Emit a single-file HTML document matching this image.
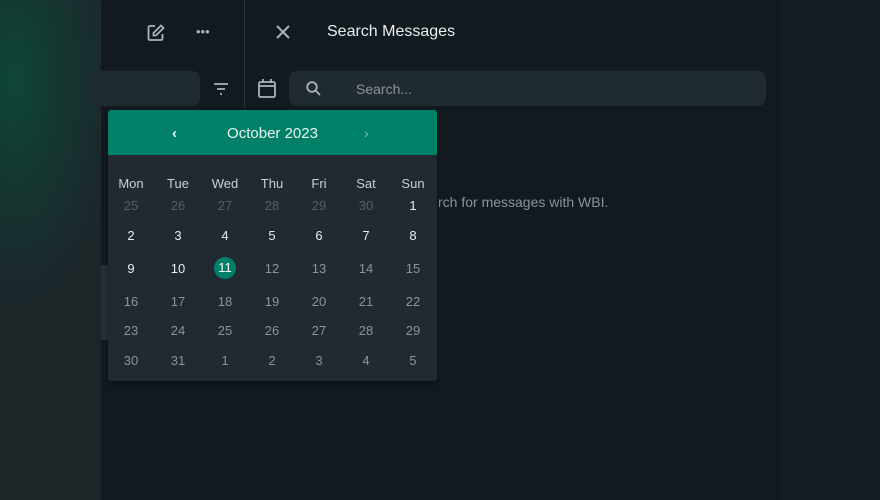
<!DOCTYPE html>
<html><head><style>
*{margin:0;padding:0;box-sizing:border-box}
body{width:880px;height:500px;overflow:hidden;background:#121a20;font-family:"Liberation Sans",sans-serif;position:relative}
.abs{position:absolute}
.left{left:0;top:0;width:101px;height:500px;background:radial-gradient(ellipse 110px 240px at 15px 80px,#0e4638 0%,#153630 45%,#1b2a2e 80%,#1c2629 100%)}
.right{left:780px;top:0;width:100px;height:500px;background:#151d23}
.cal{left:108px;top:110px;width:329px;height:271px;background:#202a30;border-radius:3px;overflow:hidden;box-shadow:0 2px 6px rgba(0,0,0,.4)}
.hdr{height:45px;background:#018068;color:#e9f5f1;font-size:15px;text-align:center;line-height:47px;position:relative}
.c{position:absolute;width:40px;text-align:center;font-size:13px;color:#8a949a}
.w{color:#e9edef}
.h{color:#c9d0d3}
</style></head><body>
<div class="abs left"></div>
<div class="abs right"></div>
<div class="abs" style="left:244px;top:0;width:1px;height:108px;background:#2a3439"></div>
<div class="abs" style="left:101px;top:265px;width:7px;height:75px;background:#253138"></div>
<svg class="abs" style="left:146px;top:23px" width="20" height="20" viewBox="0 0 20 20" fill="none" stroke="#aab3b8" stroke-width="1.8"><path d="M9 3H4a1.5 1.5 0 0 0-1.5 1.5v11A1.5 1.5 0 0 0 4 17h11a1.5 1.5 0 0 0 1.5-1.5V11"/><path d="M15 2.5l2.5 2.5L10 12.5H7.5V10z"/></svg>
<div class="abs" style="left:196px;top:24px;color:#aab3b8;font-size:13px">•••</div>
<svg class="abs" style="left:274px;top:23px" width="18" height="18" viewBox="0 0 18 18" stroke="#aab3b8" stroke-width="2"><path d="M3 3L15 15M15 3L3 15"/></svg>
<div class="abs" style="left:327px;top:23px;color:#e9edef;font-size:16px">Search Messages</div>
<div class="abs" style="left:90px;top:71px;width:110px;height:35px;background:#202b31;border-radius:8px"></div>
<svg class="abs" style="left:212px;top:81px" width="18" height="16" viewBox="0 0 18 16" stroke="#aab3b8" stroke-width="1.8"><path d="M2 3h14M5 8h8M8 13h2"/></svg>
<svg class="abs" style="left:257px;top:78px" width="20" height="21" viewBox="0 0 20 21" fill="none" stroke="#aab3b8" stroke-width="1.8"><rect x="2" y="4" width="16" height="15" rx="1.5"/><path d="M2 8h16M6 1v4M14 1v4"/></svg>
<div class="abs" style="left:289px;top:71px;width:477px;height:35px;background:#202b31;border-radius:8px"></div>
<svg class="abs" style="left:305px;top:80px" width="17" height="17" viewBox="0 0 17 17" fill="none" stroke="#aab3b8" stroke-width="1.8"><circle cx="7" cy="7" r="4.8"/><path d="M10.5 10.5L15 15"/></svg>
<div class="abs" style="left:356px;top:81px;color:#8a949a;font-size:14px">Search...</div>
<div class="abs" style="left:438px;top:194px;color:#8a949a;font-size:14px;white-space:nowrap">rch for messages with WBI.</div>
<div class="abs cal">
<div class="hdr">October 2023
<span style="position:absolute;left:64px;top:0;font-size:15px;font-weight:bold">‹</span>
<span style="position:absolute;left:256px;top:0;font-size:14px;color:#7fc3b4">›</span></div>
<div id="g"></div>
</div>
<script>
var g=document.getElementById('g'),xs=[23,70,117,164,211,258,305],ys=[73,95,125,158,191,220,250];
var d=["Mon","Tue","Wed","Thu","Fri","Sat","Sun"],h='';
d.forEach(function(t,i){h+='<div class="c h" style="left:'+(xs[i]-20)+'px;top:'+(ys[0]-7)+'px">'+t+'</div>'});
var rows=[[25,26,27,28,29,30,1],[2,3,4,5,6,7,8],[9,10,11,12,13,14,15],[16,17,18,19,20,21,22],[23,24,25,26,27,28,29],[30,31,1,2,3,4,5]];
rows.forEach(function(r,ri){r.forEach(function(n,i){var cls='c';
var st='left:'+(xs[i]-20)+'px;top:'+(ys[ri+1]-7)+'px';
if(ri==0&&i<6){h+='<div class="c" style="color:#555f65;'+st+'">'+n+'</div>';return;}
if(ri==0||ri==1||(ri==2&&i<2))cls+=' w';
if(ri==2&&i==2){h+='<div class="abs" style="left:'+(xs[i]-11)+'px;top:'+(ys[3]-11)+'px;width:22px;height:22px;border-radius:50%;background:#018068;color:#fff;font-size:13px;text-align:center;line-height:22px">11</div>';return;}
h+='<div class="'+cls+'" style="'+st+'">'+n+'</div>';})});
g.innerHTML=h;
</script>
</body></html>
